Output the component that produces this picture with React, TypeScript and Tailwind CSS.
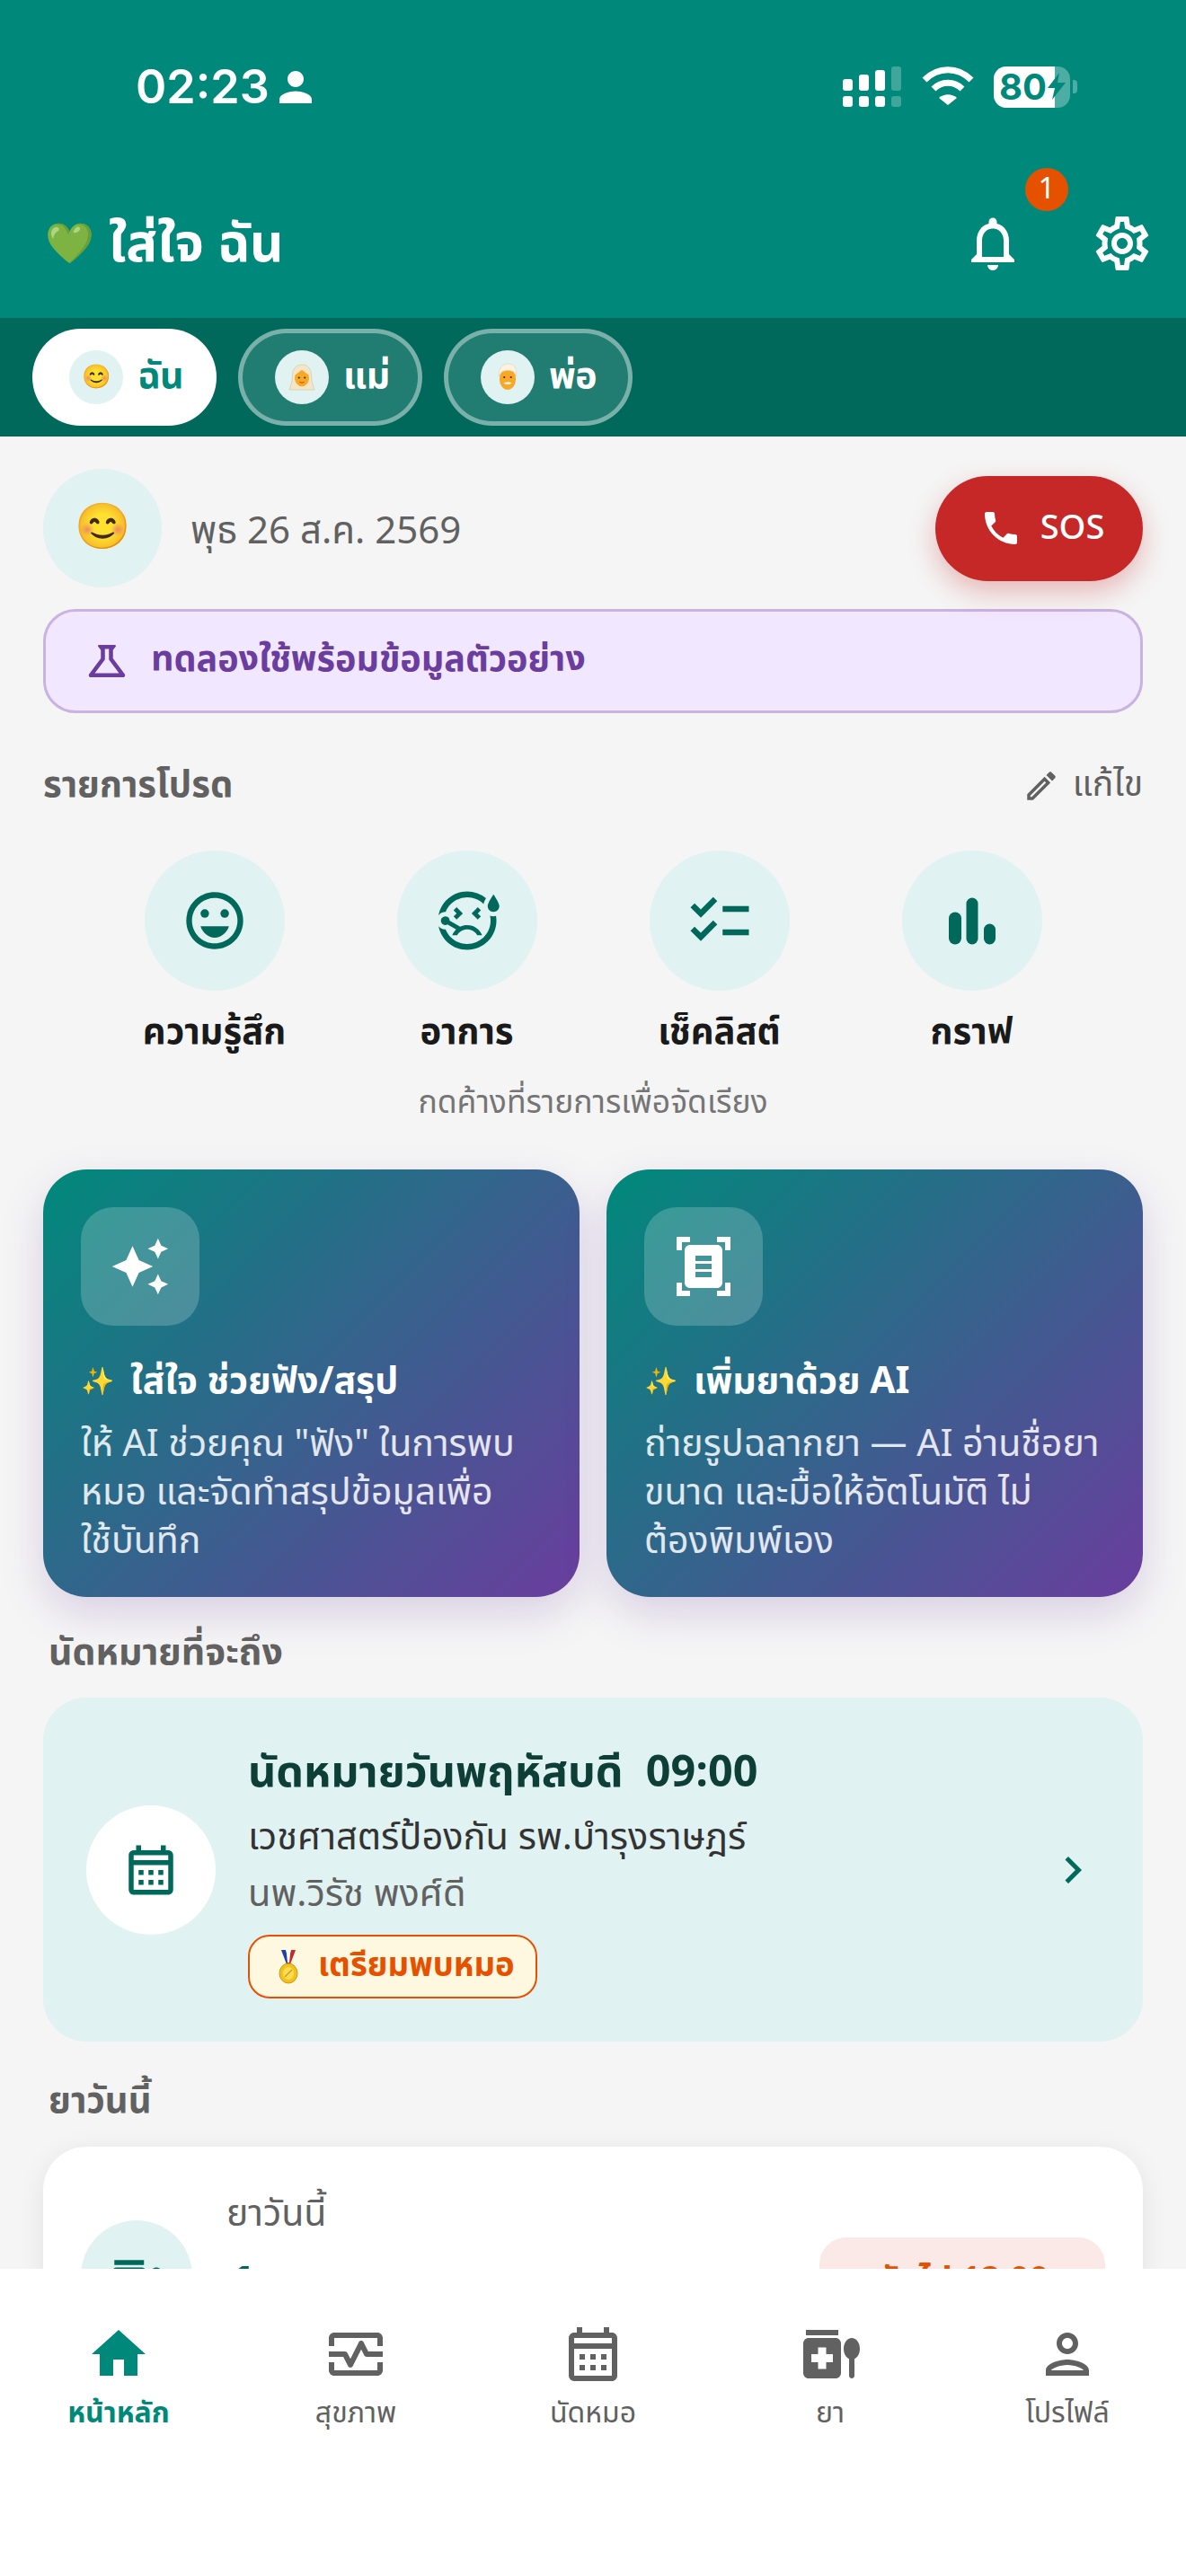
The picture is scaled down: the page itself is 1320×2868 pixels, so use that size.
import { MdHome, MdOutlineMonitorHeart, MdOutlineCalendarMonth, MdMedicationLiquid, MdOutlinePerson, MdOutlineNotifications, MdOutlineSettings, MdPhone, MdOutlineScience, MdOutlineEdit, MdOutlineEmojiEmotions, MdOutlineSick, MdChecklist, MdAutoAwesome, MdDocumentScanner, MdChevronRight, MdPerson } from "react-icons/md";

const thai = "font-['Noto_Sans_Thai','Noto_Sans','Liberation_Sans',sans-serif]";

function Signal() {
  return (
    <svg width="66" height="46" viewBox="0 0 66 46" fill="white">
      <rect x="0" y="14" width="11" height="13" rx="3" />
      <rect x="18" y="9" width="11" height="18" rx="3" />
      <rect x="36" y="4" width="11" height="23" rx="3" />
      <rect x="54" y="0" width="11" height="27" rx="3" opacity=".25" />
      <rect x="0" y="33" width="11" height="12" rx="3" />
      <rect x="18" y="33" width="11" height="12" rx="3" />
      <rect x="36" y="33" width="11" height="12" rx="3" />
      <rect x="54" y="33" width="11" height="12" rx="3" opacity=".25" />
    </svg>
  );
}

function Wifi() {
  return (
    <svg width="58" height="43" viewBox="0 0 58 43" fill="none" stroke="white" strokeWidth="7">
      <path d="M3 15 C18 0 40 0 55 15" />
      <path d="M13 25 C22 16 36 16 45 25" />
      <path d="M19 35 L29 43 L39 35 C33 30 25 30 19 35Z" fill="white" stroke="none" />
    </svg>
  );
}

function Battery() {
  return (
    <div className="relative w-[94px] h-[46px] flex items-center">
      <div className="absolute left-0 top-0 w-[85px] h-[46px] rounded-[14px] bg-white/30" />
      <div className="absolute left-0 top-0 w-[68px] h-[46px] rounded-l-[14px] bg-white" />
      <div className="absolute left-[88px] top-[15px] w-[5px] h-[15px] rounded-r-[4px] bg-white/30" />
      <span className="relative ml-[6px] text-[40px] leading-[46px] font-bold text-[#00897B] font-['Inter',sans-serif]">80</span>
      <svg className="absolute left-[60px] top-[7px]" width="20" height="30" viewBox="0 0 20 30" fill="#00897B"><path d="M13 0 L0 17 H8 L5 30 L20 11 H11Z" /></svg>
    </div>
  );
}

function Bars() {
  return (
    <svg width="72" height="72" viewBox="0 0 72 72" fill="#00695C">
      <rect x="10" y="26.5" width="14" height="36" rx="7" />
      <rect x="29.5" y="10.5" width="13" height="52" rx="6.5" />
      <rect x="49" y="39.5" width="13" height="23" rx="6.5" />
    </svg>
  );
}

function WomanEmoji() {
  return (
    <svg width="30" height="30" viewBox="0 0 28 28">
      <path d="M14 1 C6 1 4 8 4 14 C4 20 2 24 1 27 H27 C26 24 24 20 24 14 C24 8 22 1 14 1Z" fill="#F4E6C8" stroke="#D9C49A" strokeWidth=".6" />
      <ellipse cx="14" cy="15" rx="7.5" ry="8.5" fill="#F9A825" />
      <path d="M6.5 12 C9 10 12 8 14 6 C16 8 19 10 21.5 12 C21 6 17 4 14 4 C11 4 7 6 6.5 12Z" fill="#F4E6C8" />
      <circle cx="11" cy="14.5" r="1" fill="#3E2723" />
      <circle cx="17" cy="14.5" r="1" fill="#3E2723" />
      <path d="M11.5 19 Q14 20.5 16.5 19" fill="none" stroke="#A0522D" strokeWidth=".9" />
    </svg>
  );
}

function ManEmoji() {
  return (
    <svg width="30" height="32" viewBox="0 0 28 30">
      <ellipse cx="14" cy="17" rx="8.5" ry="11" fill="#F9A825" />
      <path d="M5 14 C4 5 9 1 15 1 C21 1 24 6 23 14 C22 10 20 8 14 8 C9 8 6 10 5 14Z" fill="#FBF3E0" stroke="#DCCFB0" strokeWidth=".5" />
      <circle cx="10.5" cy="15" r="1" fill="#3E2723" />
      <circle cx="17.5" cy="15" r="1" fill="#3E2723" />
      <path d="M9.5 21 Q14 19 18.5 21 Q14 24 9.5 21Z" fill="#F5F0E6" />
    </svg>
  );
}

function MedalEmoji() {
  return (
    <svg width="22" height="38" viewBox="0 0 22 38">
      <path d="M3 0 H8 L13 16 H9Z" fill="#1E3FA8" />
      <path d="M14 0 H19 L13 16 H9Z" fill="#C62828" />
      <path d="M8.5 0 H13.5 L12 14 H10Z" fill="#FFFFFF" />
      <ellipse cx="11" cy="26" rx="10" ry="11" fill="#F2C21A" stroke="#C9971A" strokeWidth="1" />
      <ellipse cx="11" cy="26" rx="6" ry="7" fill="#FBDD55" />
      <path d="M7 30 L15 22" stroke="#C9971A" strokeWidth="1.2" />
    </svg>
  );
}

function Tab({ emoji, label, active, width }: { emoji: React.ReactNode; label: string; active?: boolean; width: string }) {
  return (
    <div className={`${width} ${active ? "h-[108px] rounded-full bg-white flex items-center pl-[41px] gap-[16px]" : "h-[108px] rounded-full bg-white/[0.13] border-[5px] border-white/40 flex items-center pl-[36px] gap-[16px]"}`}>
      <div className="w-[60px] h-[60px] rounded-full bg-[#E0F2F1] flex items-center justify-center text-[26px] leading-none shrink-0">{emoji}</div>
      <span className={active ? "text-[41px] font-bold text-[#00897B] tracking-[-0.5px]" : "text-[41px] font-bold text-white tracking-[-0.5px]"}>{label}</span>
    </div>
  );
}

function Quick({ icon, label }: { icon: React.ReactNode; label: string }) {
  return (
    <div className="w-[281px] flex flex-col items-center">
      <div className="w-[156px] h-[156px] rounded-full bg-[#E0F2F1] flex items-center justify-center">{icon}</div>
      <div className="mt-[23px] text-[40px] leading-[48px] font-bold text-[#1a1a1a] whitespace-nowrap">{label}</div>
    </div>
  );
}

function AiCard({ icon, title, lines }: { icon: React.ReactNode; title: string; lines: string[] }) {
  return (
    <div className="w-[597px] h-[476px] rounded-[48px] bg-[linear-gradient(135deg,#00897B,#6A3D9E)] p-[42px] shadow-[0_18px_48px_rgba(106,61,158,0.2)]">
      <div className="w-[132px] h-[132px] rounded-[36px] bg-white/20 flex items-center justify-center">{icon}</div>
      <div className="mt-[36px] h-[54px] flex items-center gap-[18px] text-[41px] font-bold text-white whitespace-nowrap">
        <span className="text-[30px]">✨</span>
        <span>{title}</span>
      </div>
      <div className="mt-[15px] text-[41px] leading-[54px] text-white/85 whitespace-nowrap">
        {lines.map((l) => <div key={l}>{l}</div>)}
      </div>
    </div>
  );
}

function NavItem({ icon, label, active }: { icon: React.ReactNode; label: string; active?: boolean }) {
  return (
    <div className={active ? "flex-1 flex flex-col items-center text-[#00897B]" : "flex-1 flex flex-col items-center text-[#616161]"}>
      {icon}
      <span className={active ? "mt-[6px] text-[32px] leading-[48px] font-bold" : "mt-[6px] text-[32px] leading-[48px]"}>{label}</span>
    </div>
  );
}

export default function App() {
  return (
    <div className={`w-[1320px] h-[2868px] overflow-hidden flex flex-col bg-[#F5F5F5] ${thai}`}>
      <header className="h-[354px] shrink-0 bg-[#00897B] text-white flex flex-col">
        <div className="h-[220px] flex items-start pt-[70px] pl-[151px] pr-[120px] justify-between">
          <div className="flex items-center gap-[2px] h-[54px]">
            <span className="text-[52px] leading-none font-semibold font-['Inter',sans-serif]">02:23</span>
            <MdPerson size={54} />
          </div>
          <div className="flex items-start gap-[22px] pt-[4px]">
            <Signal />
            <Wifi />
            <Battery />
          </div>
        </div>
        <div className="flex items-center justify-between pl-[50px] pr-[35px] h-[102px]">
          <div className="flex items-center gap-[16px] pt-[4px]">
            <span className="text-[44px] leading-none">💚</span>
            <span className="text-[58px] leading-none font-bold">ใส่ใจ ฉัน</span>
          </div>
          <div className="flex items-center gap-[72px]">
            <div className="relative">
              <MdOutlineNotifications size={72} />
              <div className="absolute -top-[48px] left-[72px] w-[48px] h-[48px] rounded-full bg-[#E65100] flex items-center justify-center text-[33px] leading-none">1</div>
            </div>
            <MdOutlineSettings size={72} />
          </div>
        </div>
      </header>
      <div className="h-[132px] shrink-0 bg-[#00695C] flex items-center pl-[36px] gap-[24px]">
        <Tab width="w-[205px]" emoji="😊" label="ฉัน" active />
        <Tab width="w-[205px]" emoji={<WomanEmoji />} label="แม่" />
        <Tab width="w-[210px]" emoji={<ManEmoji />} label="พ่อ" />
      </div>
      <main className="flex-1 min-h-0 overflow-hidden px-[48px] pt-[36px]">
        <div className="flex items-center justify-between">
          <div className="flex items-center gap-[32px]">
            <div className="w-[132px] h-[132px] rounded-full bg-[#E0F2F1] flex items-center justify-center text-[50px] leading-none">😊</div>
            <span className="pt-[8px] text-[42px] text-[#616161]">พุธ 26 ส.ค. 2569</span>
          </div>
          <div className="w-[231px] h-[117px] pl-[6px] rounded-full bg-[#C62828] text-white flex items-center justify-center gap-[20px] text-[38px] font-medium shadow-[0_12px_30px_rgba(198,40,40,0.3)]">
            <MdPhone size={48} />
            <span>SOS</span>
          </div>
        </div>
        <div className="mt-[24px] h-[116px] rounded-[36px] border-[3px] border-[#C9B3E0] bg-[#F1E7FF] flex items-center pl-[41px] gap-[22px] text-[#6A3D9E] text-[39.5px] font-bold">
          <MdOutlineScience size={54} />
          <span>ทดลองใช้พร้อมข้อมูลตัวอย่าง</span>
        </div>
        <div className="mt-[51px] flex items-center justify-between h-[60px]">
          <span className="text-[40px] font-bold text-[#616161]">รายการโปรด</span>
          <div className="flex items-center gap-[14px] text-[#616161] text-[39px]">
            <MdOutlineEdit size={42} />
            <span>แก้ไข</span>
          </div>
        </div>
        <div className="mt-[42px] flex justify-center">
          <Quick icon={<MdOutlineEmojiEmotions size={76} color="#00695C" />} label="ความรู้สึก" />
          <Quick icon={<MdOutlineSick size={78} color="#00695C" />} label="อาการ" />
          <Quick icon={<MdChecklist size={78} color="#00695C" />} label="เช็คลิสต์" />
          <Quick icon={<Bars />} label="กราฟ" />
        </div>
        <div className="mt-[30px] text-center text-[35.5px] leading-[48px] text-[#757575]">กดค้างที่รายการเพื่อจัดเรียง</div>
        <div className="mt-[50px] flex gap-[30px]">
          <AiCard icon={<MdAutoAwesome size={68} color="white" />} title="ใส่ใจ ช่วยฟัง/สรุป" lines={['ให้ AI ช่วยคุณ "ฟัง" ในการพบ', "หมอ และจัดทำสรุปข้อมูลเพื่อ", "ใช้บันทึก"]} />
          <AiCard icon={<MdDocumentScanner size={72} color="white" />} title="เพิ่มยาด้วย AI" lines={["ถ่ายรูปฉลากยา — AI อ่านชื่อยา", "ขนาด และมื้อให้อัตโนมัติ ไม่", "ต้องพิมพ์เอง"]} />
        </div>
        <div className="mt-[38px] pl-[6px] text-[41px] leading-[48px] font-bold text-[#616161]">นัดหมายที่จะถึง</div>
        <div className="mt-[26px] h-[383px] rounded-[48px] bg-[#E0F2F1] flex items-center pl-[48px] pr-[48px] gap-[36px]">
          <div className="w-[144px] h-[144px] rounded-full bg-white flex items-center justify-center">
            <MdOutlineCalendarMonth size={66} color="#00695C" />
          </div>
          <div className="flex-1 min-w-0 pt-[4px]">
            <div className="text-[48.5px] leading-[66px] font-bold text-[#0D3F36] whitespace-pre">{"นัดหมายวันพฤหัสบดี  09:00"}</div>
            <div className="mt-[9px] text-[41.5px] leading-[60px] text-[#333333]">เวชศาสตร์ป้องกัน รพ.บำรุงราษฎร์</div>
            <div className="mt-[3px] text-[41.5px] leading-[60px] text-[#616161]">นพ.วิรัช พงศ์ดี</div>
            <div className="mt-[14px] inline-flex items-center gap-[22px] h-[71px] w-[322px] pl-[32px] rounded-[24px] border-[2px] border-[#E65100] bg-[#FFF8E1] text-[#E65100] text-[36.5px] font-bold">
              <MedalEmoji />
              <span>เตรียมพบหมอ</span>
            </div>
          </div>
          <MdChevronRight size={60} color="#00695C" />
        </div>
        <div className="mt-[43px] pl-[6px] text-[40px] leading-[48px] font-bold text-[#616161]">ยาวันนี้</div>
        <div className="mt-[26px] h-[300px] rounded-[48px] bg-white shadow-[0_6px_30px_rgba(0,0,0,0.08)] flex items-start pl-[42px] pr-[42px] pt-[42px] gap-[38px]">
          <div className="mt-[40px] w-[124px] h-[124px] pt-[14px] rounded-full bg-[#E0F2F1] flex items-center justify-center">
            <MdMedicationLiquid size={66} color="#00695C" />
          </div>
          <div className="flex-1">
            <div className="mt-[3px] text-[41px] leading-[60px] text-[#616161]">ยาวันนี้</div>
            <div className="mt-[16px] text-[60px] leading-[72px] font-bold text-[#00695C]">1</div>
          </div>
          <div className="mt-[59px] h-[94px] w-[318px] rounded-[30px] bg-[#FBE9E7] flex items-center justify-center text-[#E65100] text-[38px] font-bold">ถัดไป 12:00</div>
        </div>
      </main>
      <nav className="h-[342px] shrink-0 bg-white flex pt-[59px]">
        <NavItem active icon={<MdHome size={72} />} label="หน้าหลัก" />
        <NavItem icon={<MdOutlineMonitorHeart size={72} />} label="สุขภาพ" />
        <NavItem icon={<MdOutlineCalendarMonth size={72} />} label="นัดหมอ" />
        <NavItem icon={<MdMedicationLiquid size={72} />} label="ยา" />
        <NavItem icon={<MdOutlinePerson size={72} />} label="โปรไฟล์" />
      </nav>
    </div>
  );
}
